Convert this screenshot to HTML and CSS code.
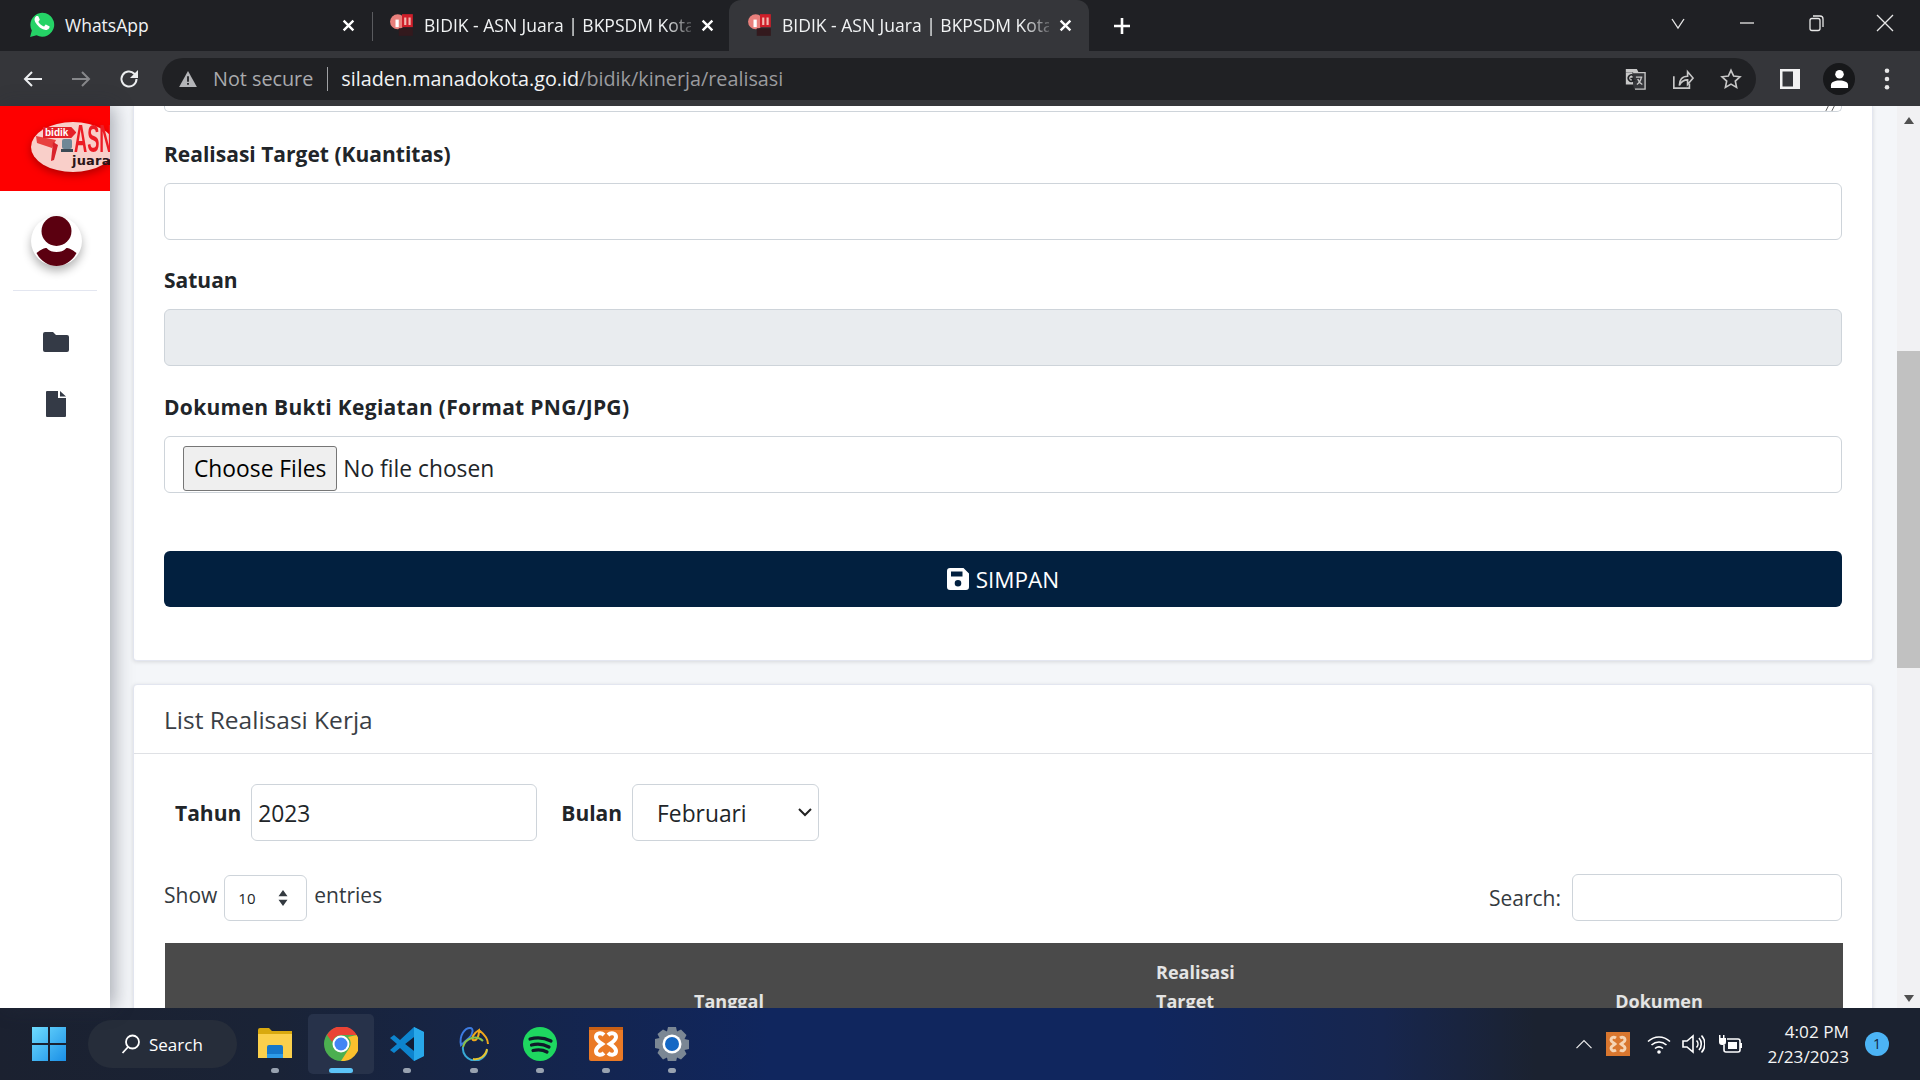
FILE: index.html
```html
<!DOCTYPE html>
<html lang="id">
<head>
<meta charset="utf-8">
<title>BIDIK - ASN Juara | BKPSDM Kota Manado</title>
<link rel="stylesheet" href="styles.css">
</head>
<body>
<header class="browser">
  <div class="tabstrip">
    <div class="tab tab-wa">
      <svg class="favicon-wa" viewBox="0 0 24 24"><path fill="#25d366" d="M1 23l1.600-6A11 11 0 1 1 7 21.400z"/><path fill="#fff" d="M8.500 6.300c-.3-.6-.6-.6-.9-.6h-.8c-.3 0-.7.100-1.100.5-.4.400-1.400 1.400-1.400 3.300s1.400 3.800 1.600 4.100c.2.300 2.800 4.400 6.800 6 3.400 1.300 4 1.100 4.800 1 .7-.1 2.400-1 2.700-1.900.3-.9.300-1.800.2-1.900-.1-.2-.4-.3-.8-.5l-2.700-1.300c-.4-.1-.6-.2-.9.200l-1.200 1.500c-.2.300-.5.300-.8.100-.4-.2-1.700-.6-3.200-2-1.200-1-2-2.300-2.200-2.700-.2-.4 0-.6.200-.8l.6-.7.400-.7c.1-.3.100-.5 0-.7z" transform="translate(1.400 -1.200) scale(.86)"/></svg>
      <span class="tab-title tab-title-plain">WhatsApp</span>
      <svg class="tab-x" viewBox="0 0 12 12"><path d="M1.500 1.500l9 9m0-9l-9 9"/></svg>
    </div>
    <div class="tab tab-second">
      <svg class="favicon" viewBox="0 0 24 24"><circle cx="8" cy="9" r="7" fill="#e8807c"/><path fill="#fff" d="M6 7h3v7H6z"/><path fill="#cf1f2a" d="M12 2h10v12H12z"/><path fill="#f2b8b0" d="M14 5h2v7h-2zM18 5h2v7h-2z"/><path fill="#33191d" d="M9 15h13v7H9z"/></svg>
      <span class="tab-title">BIDIK - ASN Juara | BKPSDM Kota</span>
      <svg class="tab-x" viewBox="0 0 12 12"><path d="M1.500 1.500l9 9m0-9l-9 9"/></svg>
    </div>
    <div class="tab tab-active">
      <svg class="favicon" viewBox="0 0 24 24"><circle cx="8" cy="9" r="7" fill="#e8807c"/><path fill="#fff" d="M6 7h3v7H6z"/><path fill="#cf1f2a" d="M12 2h10v12H12z"/><path fill="#f2b8b0" d="M14 5h2v7h-2zM18 5h2v7h-2z"/><path fill="#33191d" d="M9 15h13v7H9z"/></svg>
      <span class="tab-title">BIDIK - ASN Juara | BKPSDM Kota</span>
      <svg class="tab-x" viewBox="0 0 12 12"><path d="M1.500 1.500l9 9m0-9l-9 9"/></svg>
    </div>
    <svg class="new-tab" viewBox="0 0 18 18"><path d="M9 1v16M1 9h16"/></svg>
    <div class="win-controls">
      <svg class="win-ic" viewBox="0 0 20 20"><path d="M4 6l6 9 6-9"/></svg>
      <svg class="win-ic" viewBox="0 0 20 20"><path d="M3 10h14"/></svg>
      <svg class="win-ic" viewBox="0 0 20 20"><rect x="4" y="5.500" width="10" height="12" rx="2"/><path d="M7 3h7a3 3 0 0 1 3 3v8"/></svg>
      <svg class="win-ic" viewBox="0 0 20 20"><path d="M2 2l16 16M18 2L2 18"/></svg>
    </div>
  </div>
  <div class="toolbar">
    <svg class="nav-ic" viewBox="0 0 24 24"><path d="M21 12H4M11 5l-7 7 7 7"/></svg>
    <svg class="nav-ic nav-dim" viewBox="0 0 24 24"><path d="M3 12h17M13 5l7 7-7 7"/></svg>
    <svg class="nav-ic" viewBox="0 0 24 24"><path d="M19.500 12a7.500 7.500 0 1 1-2.200-5.300L20 9.500"/><path class="fill-ic" d="M21 3v8h-8z"/></svg>
    <div class="omnibox">
      <svg class="warn" viewBox="0 0 20 18"><path d="M10 0l10 18H0z" fill="#b4b5b8"/><path d="M9 6h2v6H9zM9 13.500h2v2H9z" fill="#202124"/></svg>
      <span class="not-secure">Not secure</span>
      <span class="omni-sep"></span>
      <span class="url"><span class="url-host">siladen.manadokota.go.id</span>/bidik/kinerja/realisasi</span>
      <div class="omni-actions">
        <svg class="omni-ic" viewBox="0 0 24 24"><path fill="#c8c8c8" d="M2 1h12l2 4H2z"/><path fill="#c8c8c8" d="M2 5h11v13H2z"/><path fill="#35363a" d="M9 5h14v18H11l-1-4z"/><path fill="none" stroke="#c8c8c8" stroke-width="1.500" d="M10 5h13v18H12"/><path fill="none" stroke="#c8c8c8" stroke-width="1.500" d="M13 10h7M19 10c-1 5-3 7-5 8M15 12c1 3 3 5 5 6"/><path fill="none" stroke="#202124" stroke-width="1.800" d="M10 8a3.500 3.500 0 1 0 0 6h-.500v-2.500H7"/></svg>
        <svg class="omni-ic omni-line" viewBox="0 0 24 24"><path d="M2 9v13h17v-5"/><path d="M8 19c0-6 3-10 9-10V4l6 7-6 7v-5c-4 0-7 2-9 6z"/></svg>
        <svg class="omni-ic omni-line" viewBox="0 0 24 24"><path d="M12 2.500l2.900 6.300 6.900.8-5.100 4.700 1.400 6.800L12 17.600l-6.100 3.500 1.400-6.800-5.100-4.700 6.900-.8z"/></svg>
      </div>
    </div>
    <svg class="panel-ic" viewBox="0 0 20 20"><path fill="#f2f2f2" fill-rule="evenodd" d="M0 0h20v20H0zM2.500 2.500v15h10.500v-15z"/></svg>
    <span class="profile"><svg viewBox="0 0 20 20"><circle cx="10" cy="5.500" r="4.500" fill="#fff"/><path fill="#fff" d="M1 20v-3c0-3.500 4-5 9-5s9 1.500 9 5v3z"/></svg></span>
    <svg class="kebab" viewBox="0 0 6 24"><circle cx="3" cy="3" r="2.500"/><circle cx="3" cy="12" r="2.500"/><circle cx="3" cy="21" r="2.500"/></svg>
  </div>
</header>

<div class="viewport">
  <aside class="sidebar">
    <div class="brand">
      <div class="brand-oval">
        <svg class="brand-art" viewBox="0 0 44 40"><path fill="#e8413f" d="M2 10l20 4-4 8L3 17z"/><path fill="#d9232b" d="M19 16l5 3-4 15-3 1z"/><rect x="28" y="13" width="10" height="10" rx="2" fill="#6f8796"/><path fill="#3c4a55" d="M27 23h12v3H27z"/></svg>
        <span class="brand-bidik">bidik</span>
        <span class="brand-asn">ASN</span>
        <span class="brand-juara">juara</span>
      </div>
    </div>
    <div class="avatar-wrap">
      <span class="avatar"><svg viewBox="0 0 50 50"><circle cx="25" cy="15" r="15" fill="#5b0010"/><path fill="#5b0010" d="M5 37c5-4 8-5 10-5 3 3 6 4 10 4s7-1 10-4c2 0 5 1 10 5-4 8-12 13-20 13S9 45 5 37z"/></svg></span>
    </div>
    <nav class="side-nav">
      <svg class="side-ic-folder" viewBox="0 0 26 20"><path d="M2 0h8l3 3h11a2 2 0 0 1 2 2v13a2 2 0 0 1-2 2H2a2 2 0 0 1-2-2V2a2 2 0 0 1 2-2z"/></svg>
      <svg class="side-ic-file" viewBox="0 0 20 26"><path d="M0 1a1 1 0 0 1 1-1h11v7h8v18a1 1 0 0 1-1 1H1a1 1 0 0 1-1-1zM14 0l6 5.500h-6z"/></svg>
    </nav>
  </aside>

  <main class="content">
    <section class="card card-form">
      <div class="clipped-field">
        <svg class="resize-grip" viewBox="0 0 14 8"><path d="M5 0L1 8M12 0L8 8"/></svg>
      </div>
      <div class="field field-first">
        <label class="field-label">Realisasi Target (Kuantitas)</label>
        <input class="control" type="text">
      </div>
      <div class="field field-unit">
        <label class="field-label">Satuan</label>
        <input class="control control-disabled" type="text" disabled>
      </div>
      <div class="field field-file">
        <label class="field-label field-label-wide">Dokumen Bukti Kegiatan (Format PNG/JPG)</label>
        <input class="control control-file" type="file" multiple>
      </div>
      <button class="btn-save" type="button">
        <svg viewBox="0 0 22 22"><path fill="#fff" fill-rule="evenodd" d="M3 0h13.500L22 5.500V19a3 3 0 0 1-3 3H3a3 3 0 0 1-3-3V3a3 3 0 0 1 3-3zM4 3.500v5h11.500v-5zM11 12a3.300 3.300 0 1 0 0 6.600 3.300 3.300 0 0 0 0-6.600z"/></svg>
        <span>SIMPAN</span>
      </button>
    </section>

    <section class="card card-list">
      <h2 class="card-head">List Realisasi Kerja</h2>
      <div class="card-body">
        <div class="filters">
          <label class="filter-label">Tahun</label>
          <input class="control filter-year" type="text" value="2023">
          <label class="filter-label filter-label-month">Bulan</label>
          <select class="control filter-month"><option>Februari</option></select>
        </div>
        <div class="dt-top">
          <div class="dt-length">
            <span>Show</span>
            <span class="len-select">10
              <svg viewBox="0 0 12 20"><path d="M6 1l5 7H1zM6 19l5-7H1z"/></svg>
            </span>
            <span>entries</span>
          </div>
          <div class="dt-search">
            <span>Search:</span>
            <input class="control search-input" type="text">
          </div>
        </div>
        <table class="dt">
          <thead>
            <tr>
              <th class="col-date">Tanggal</th>
              <th class="col-real">Realisasi<br>Target</th>
              <th class="col-doc">Dokumen</th>
            </tr>
          </thead>
        </table>
      </div>
    </section>
  </main>

  <div class="scrollbar">
    <svg class="sb-arrow" viewBox="0 0 10 7"><path d="M5 0l5 7H0z"/></svg>
    <div class="sb-track"><div class="sb-thumb"></div></div>
    <svg class="sb-arrow" viewBox="0 0 10 7"><path d="M0 0h10L5 7z"/></svg>
  </div>
</div>

<footer class="taskbar">
  <svg class="start" viewBox="0 0 36 36"><defs><linearGradient id="w1" x1="0" y1="0" x2="1" y2="1"><stop offset="0" stop-color="#6fdcff"/><stop offset="1" stop-color="#1a8fe6"/></linearGradient></defs><path fill="url(#w1)" d="M1 1h16v16H1zM19 1h16v16H19zM1 19h16v16H1zM19 19h16v16H19z"/></svg>
  <div class="search-pill">
    <svg viewBox="0 0 20 20"><circle cx="11.500" cy="8" r="6.500"/><path d="M7 13l-5.500 6"/></svg>
    <span>Search</span>
  </div>
  <div class="task-icons">
    <span class="task"><svg viewBox="0 0 34 34"><path fill="#d9a90f" d="M0 3a2 2 0 0 1 2-2h9l3 3h20v8H0z"/><path fill="#fbd04c" d="M0 7h34v24H0z"/><path fill="#1677c9" d="M9 20a2 2 0 0 1 2-2h12a2 2 0 0 1 2 2v11H9z"/><path fill="#2d9be8" d="M9 27h16v4H9z"/></svg><i class="dot"></i></span>
    <span class="task task-active"><svg viewBox="0 0 34 34"><circle cx="17" cy="17" r="17" fill="#4caf50"/><path fill="#ea4335" d="M3 8a17 17 0 0 1 29.700 0H17a9 9 0 0 0-8.800 7z"/><path fill="#fbc02d" d="M32.700 8A17 17 0 0 1 17 34l7.700-12A9 9 0 0 0 24 10z"/><circle cx="17" cy="17" r="8.500" fill="#fff"/><circle cx="17" cy="17" r="6.500" fill="#4285f4"/></svg><i class="dot dot-active"></i></span>
    <span class="task"><svg viewBox="0 0 34 34"><path fill="#0d84ce" d="M24 0l10 5v24l-10 5-14-13-6 5-4-3 7-6-7-6 4-3 6 5z"/><path fill="#28a8ea" d="M24 0l10 5v24l-10 5zM24 10l-9 7 9 7z"/><path fill="#111d36" d="M24 10l-9 7 9 7z"/></svg><i class="dot"></i></span>
    <span class="task"><svg class="task-netbeans" viewBox="0 0 34 34"><path stroke="#3d7be0" d="M4 18C2 8 8 1 13 1c4 0 3 6-1 10-3 3-6 5-8 7z"/><path stroke="#f0a81c" d="M22 3c-5 3-8 8-6 10 4 1 6-3 6-10zm0 0c5 4 9 9 9 14"/><path stroke="#38a9d6" d="M6 20a12 12 0 0 0 24 3"/><path stroke="#8bc34a" d="M6 20a12 12 0 0 1 20-6"/><path stroke="#e5c530" d="M30 22a12 12 0 0 1-14 10"/></svg><i class="dot"></i></span>
    <span class="task"><svg viewBox="0 0 34 34"><circle cx="17" cy="17" r="17" fill="#1ed760"/><path fill="none" stroke="#101a2a" stroke-linecap="round" stroke-width="3.200" d="M7 12c7-2 14-1.500 21 2M8.500 18c6-1.600 12-1 17.500 2M10 23.500c5-1.200 10-.8 14 1.500"/></svg><i class="dot"></i></span>
    <span class="task"><svg viewBox="0 0 34 34"><rect width="34" height="34" rx="2" fill="#ea7a26"/><path fill="#c85f14" d="M0 0h34v3H0z"/><path fill="none" stroke="#fff" stroke-width="4" d="M15 8c-3-3-8-2-8 2 0 3 3 5 6 7-3 2-6 4-6 7 0 4 5 5 8 2M19 8c3-3 8-2 8 2 0 3-3 5-6 7 3 2 6 4 6 7 0 4-5 5-8 2"/></svg><i class="dot"></i></span>
    <span class="task"><svg viewBox="0 0 34 34"><path fill="#7b8794" d="M13 0h8l1 4.500 4-2 5.500 5.500-2 4 4.500 1v9l-4.500 1 2 4-5.500 5.500-4-2-1 4.500h-8l-1-4.500-4 2L2.500 26l2-4L0 21v-9l4.500-1-2-4L8 2.500l4 2z"/><circle cx="17" cy="17" r="9.500" fill="#fff"/><circle cx="17" cy="17" r="7" fill="#1467c4"/></svg><i class="dot"></i></span>
  </div>
  <div class="tray">
    <svg class="tray-caret" viewBox="0 0 20 12"><path d="M1 11l9-9 9 9"/></svg>
    <svg class="tray-xampp" viewBox="0 0 24 24"><rect width="24" height="24" fill="#d9772f"/><path fill="none" stroke="#f5d5b5" stroke-width="3" d="M10 6C7 4 5 6 5 8s3 3 4 4c-1 1-4 2-4 4s2 4 5 2M14 6c3-2 5 0 5 2s-3 3-4 4c1 1 4 2 4 4s-2 4-5 2"/></svg>
    <svg class="tray-ic tray-wifi" viewBox="0 0 24 24"><path d="M1 9.500c6.500-6 15.500-6 22 0M4.500 13c4.500-4 10.500-4 15 0M8 16.500c2.500-2 5.500-2 8 0"/><circle class="tray-fill" cx="12" cy="20" r="1.800"/></svg>
    <svg class="tray-ic" viewBox="0 0 24 24"><path d="M2 9h4l6-5v16l-6-5H2zM15.500 8.500a5 5 0 0 1 0 7M18 6a9 9 0 0 1 0 12M20.500 3.500a12.500 12.500 0 0 1 0 17"/></svg>
    <svg class="tray-ic" viewBox="0 0 24 24"><path d="M9 7h11a2 2 0 0 1 2 2v9a2 2 0 0 1-2 2H8a2 2 0 0 1-2-2v-5"/><path class="tray-fill" d="M10 10h9v7h-9zM22 11h2v5h-2zM1 3h1.500v3h2.500V3h1.500v3H8v4a3 3 0 0 1-3 3H4a3 3 0 0 1-3-3z"/></svg>
    <div class="clock"><span>4:02 PM</span><span>2/23/2023</span></div>
    <span class="notif">1</span>
  </div>
</footer>
</body>
</html>
```

FILE: styles.css
```css
* { box-sizing: border-box; }
html, body { margin: 0; padding: 0; }
body {
  width: 1920px;
  height: 1080px;
  overflow: hidden;
  display: flex;
  flex-direction: column;
  font-family: "Open Sans", "Noto Sans", sans-serif;
  color: #212529;
  background: #fff;
}

/* browser chrome */
.browser { flex: none; height: 106px; background: #35363a; }
.tabstrip {
  height: 51px;
  display: flex;
  align-items: stretch;
  background: #1f2024;
  color: #f1f3f4;
}
.tab {
  position: relative;
  display: flex;
  align-items: center;
  padding-bottom: 1px;
  font-size: 17.500px;
}
.tab-wa { width: 372px; padding-left: 29px; padding-right: 17px; }
.tab-second { width: 357px; padding-left: 17px; padding-right: 15px; }
.tab-second::before {
  content: "";
  position: absolute;
  left: 0;
  top: 12px;
  bottom: 10px;
  width: 1px;
  background: #5a5b5f;
}
.tab-active {
  width: 360px;
  padding-left: 18px;
  padding-right: 17px;
  background: #35363a;
  border-radius: 12px 12px 0 0;
}
.favicon-wa { width: 26px; height: 26px; flex: none; margin-right: 10px; }
.favicon { width: 26px; height: 26px; flex: none; margin-right: 9px; }
.tab-title {
  flex: 1;
  min-width: 0;
  white-space: nowrap;
  -webkit-mask-image: linear-gradient(90deg, #000 90%, rgba(0, 0, 0, .25));
  mask-image: linear-gradient(90deg, #000 90%, rgba(0, 0, 0, .25));
}
.tab-title-plain { -webkit-mask-image: none; mask-image: none; }
.tab-x { width: 13px; height: 13px; flex: none; margin-left: 10px; fill: none; stroke: #fff; stroke-width: 2.200; }
.new-tab { width: 18px; height: 18px; margin: 17px 0 0 24px; fill: none; stroke: #fff; stroke-width: 2.600; }
.win-controls { margin-left: auto; display: flex; align-items: center; gap: 49px; padding: 0 25px 6px 0; }
.win-ic { width: 20px; height: 20px; fill: none; stroke: #e8e8e8; stroke-width: 1.300; }

.toolbar { height: 55px; display: flex; align-items: center; padding-left: 21px; }
.nav-ic { width: 24px; height: 24px; margin-right: 24px; fill: none; stroke: #eceef0; stroke-width: 2; }
.nav-dim { stroke: #86878a; }
.fill-ic { fill: #eceef0; stroke: none; }
.omnibox {
  width: 1594px;
  height: 42px;
  margin-left: -3px;
  border-radius: 21px;
  background: #202124;
  display: flex;
  align-items: center;
  padding: 0 14px 0 17px;
  font-size: 19.800px;
  white-space: nowrap;
}
.warn { width: 18px; height: 16px; margin-right: 16px; }
.not-secure { color: #a9aaad; }
.omni-sep { width: 1px; height: 24px; background: #a0a1a4; margin: 0 13px 0 14px; }
.url { color: #9a9b9e; }
.url-host { color: #f1f3f4; }
.omni-actions { margin-left: auto; display: flex; align-items: center; gap: 26px; }
.omni-ic { width: 22px; height: 22px; }
.omni-line { fill: none; stroke: #c8c8c8; stroke-width: 1.800; }
.panel-ic { width: 20px; height: 20px; margin-left: 24px; }
.profile {
  width: 32px;
  height: 32px;
  margin-left: 23px;
  border-radius: 50%;
  background: #17181a;
  display: flex;
  align-items: center;
  justify-content: center;
}
.profile svg { width: 19px; height: 19px; }
.kebab { width: 6px; height: 22px; margin-left: 29px; fill: #e8e8e8; }

/* page */
.viewport { flex: 1; min-height: 0; display: flex; }
.sidebar {
  flex: none;
  width: 110px;
  background: #fff;
  box-shadow: 4px 0 18px rgba(40, 44, 60, .38);
  position: relative;
  z-index: 1;
  overflow: hidden;
}
.brand {
  height: 85px;
  background: #fe0000;
  padding: 16px 0 0 31px;
  overflow: hidden;
}
.brand-oval {
  position: relative;
  width: 84px;
  height: 50px;
  border-radius: 50%;
  background: #f9cfc9;
  box-shadow: 0 3px 8px rgba(120, 0, 0, .6);
}
.brand-art { position: absolute; left: 3px; top: 4px; width: 44px; height: 40px; }
.brand-bidik {
  position: absolute;
  left: 12px;
  top: 5px;
  padding: 0 8px 0 2px;
  background: #e52028;
  color: #fff;
  font: bold 10px/11px "Liberation Sans", sans-serif;
  clip-path: polygon(0 0, 85% 0, 100% 50%, 85% 100%, 0 100%);
}
.brand-asn {
  position: absolute;
  left: 43px;
  top: 4px;
  color: #ec1c24;
  font: bold 38px/27px "Liberation Sans", sans-serif;
  transform: scaleX(.48);
  transform-origin: left top;
}
.brand-juara {
  position: absolute;
  left: 41px;
  top: 31px;
  color: #2a1518;
  font: bold 13px/15px "DejaVu Sans", sans-serif;
  letter-spacing: .2px;
}
.avatar-wrap {
  height: 100px;
  margin: 0 13px;
  border-bottom: 1px solid #e3e6f0;
  display: flex;
  justify-content: center;
  padding: 25px 0 0 2px;
}
.avatar {
  width: 51px;
  height: 50px;
  border-radius: 50%;
  background: #fff;
  box-shadow: 0 5px 10px rgba(0, 0, 0, .3);
}
.avatar svg { display: block; width: 100%; height: 100%; }
.side-nav { display: flex; flex-direction: column; align-items: center; padding: 41px 0 0 2px; fill: #343a46; }
.side-ic-folder { width: 26px; height: 20px; margin-bottom: 39px; }
.side-ic-file { width: 20px; height: 26px; }

.content {
  flex: 1;
  min-width: 0;
  overflow: hidden;
  background: #f4f6f9;
  padding: 0 24px 0 23px;
}
.card {
  background: #fff;
  border: 1px solid #e3e6f0;
  box-shadow: 0 1px 4px rgba(0, 0, 0, .12);
  border-radius: 4px;
}
.card-form { border-top: 0; border-radius: 0 0 4px 4px; padding: 0 30px; height: 555px; }
.clipped-field {
  position: relative;
  height: 6px;
  border: 1px solid #ced4da;
  border-top: 0;
  border-radius: 0 0 5px 5px;
}
.resize-grip { position: absolute; right: 4px; top: -2px; width: 12px; height: 7px; fill: none; stroke: #444; stroke-width: 1; }
.field { margin-bottom: 26px; }
.field-first { margin-top: 28px; }
.field-label { display: block; height: 43px; margin-top: -1px; padding-bottom: 1px; font-size: 21px; font-weight: 700; line-height: 30px; }
.field-first .field-label { height: 44px; }
.field-label-wide { letter-spacing: .3px; }
.control {
  font-family: inherit;
  font-size: 22.800px;
  color: #212529;
  background: #fff;
  border: 1px solid #ced4da;
  border-radius: 6px;
  outline: 0;
  padding: 0 6px;
}
.field .control { display: block; width: 100%; height: 57px; }
.control-disabled { background: #e9ecef; }
.field-unit { margin-bottom: 27px; }
.field-unit .field-label { height: 44px; }
.field-file { margin-bottom: 58px; }
.field-file .field-label { height: 44px; }
.field .control-file { padding: 9px 18px; }
.control-file::file-selector-button { font: inherit; height: 45px; margin-right: 6px; padding: 0 10px; border-radius: 3px; border: 1px solid #767676; background: #efefef; }
.btn-save {
  display: flex;
  align-items: center;
  justify-content: center;
  gap: 7px;
  width: 100%;
  height: 56px;
  border: 0;
  border-radius: 6px;
  background: #02203f;
  color: #fff;
  font-family: inherit;
  font-size: 22.500px;
}
.btn-save svg { width: 22px; height: 22px; }

.card-list { margin-top: 23px; height: 500px; }
.card-head {
  margin: 0;
  height: 69px;
  padding: 0 30px;
  display: flex;
  align-items: center;
  border-bottom: 1px solid #dfe1e5;
  font-size: 24.500px;
  font-weight: 400;
  color: #3a3e45;
}
.card-body { padding: 30px 30px 0; }
.filters { display: flex; align-items: center; height: 57px; padding-left: 11px; }
.filter-label { font-size: 21px; font-weight: 700; margin-right: 10px; }
.filter-label-month { margin-left: 24px; }
.filters .control { height: 57px; }
.filter-year { width: 286px; padding-top: 2px; }
.filter-month {
  width: 187px;
  padding-left: 24px;
  padding-top: 2px;
  appearance: none;
  -webkit-appearance: none;
  background-image: url("data:image/svg+xml,%3Csvg xmlns='http://www.w3.org/2000/svg' viewBox='0 0 14 9'%3E%3Cpath d='M1 1l6 6 6-6' fill='none' stroke='%23222' stroke-width='2'/%3E%3C/svg%3E");
  background-repeat: no-repeat;
  background-position: right 6px center;
  background-size: 14px 9px;
}
.dt-top { display: flex; justify-content: space-between; align-items: center; margin-top: 33px; font-size: 21px; color: #343a40; }
.dt-length { display: flex; align-items: center; gap: 7px; }
.dt-length span:first-child, .dt-length span:last-child { position: relative; top: -3px; }
.len-select {
  width: 83px;
  height: 46px;
  border: 1px solid #ced4da;
  border-radius: 6px;
  display: flex;
  align-items: center;
  justify-content: space-between;
  padding: 0 17px 0 13px;
  font-size: 15px;
  color: #212529;
}
.len-select svg { width: 12px; height: 18px; fill: #343a40; }
.dt-search { display: flex; align-items: center; gap: 11px; }
.search-input { width: 270px; height: 47px; }
.dt { width: 1678px; margin: 22px 0 0 1px; border-collapse: collapse; table-layout: fixed; }
.dt th {
  background: #4a4a4a;
  color: #e4e4e4;
  font-size: 18px;
  font-weight: 700;
  line-height: 29px;
  height: 73px;
  vertical-align: bottom;
  padding: 0;
}
.col-date { width: 860px; text-align: center; padding-left: 268px !important; }
.col-real { width: 430px; text-align: left; padding-left: 131px !important; }
.col-doc { text-align: center; padding-left: 20px !important; }

.scrollbar { flex: none; width: 23px; background: #f1f1f3; display: flex; flex-direction: column; align-items: center; padding: 11px 0 6px; }
.sb-arrow { flex: none; width: 10px; height: 7px; fill: #505050; }
.sb-track { flex: 1; width: 100%; padding-top: 227px; }
.sb-thumb { width: 100%; height: 317px; background: #c1c1c1; }

/* taskbar */
.taskbar {
  flex: none;
  height: 72px;
  display: flex;
  align-items: center;
  padding-left: 31px;
  background: linear-gradient(90deg, #1b2130 0, #1a2336 14%, #10265e 40%, #10265e 60%, #17264e 72%, #1b2230 80%);
  color: #fff;
}
.start { width: 36px; height: 36px; flex: none; }
.search-pill {
  width: 149px;
  height: 48px;
  margin-left: 21px;
  border-radius: 24px;
  background: #262d3a;
  display: flex;
  align-items: center;
  gap: 8px;
  padding-left: 33px;
  font-size: 17px;
}
.search-pill svg { width: 20px; height: 20px; fill: none; stroke: #fff; stroke-width: 1.800; }
.task-icons { display: flex; margin-left: 5px; }
.task { position: relative; width: 66.200px; height: 60px; display: flex; align-items: center; justify-content: center; }
.task svg { width: 34px; height: 34px; }
.task-netbeans { fill: none; stroke-width: 2; }
.task-active { background: #27324a; border-radius: 5px; }
.dot { position: absolute; left: 50%; bottom: 1px; width: 8px; height: 5px; margin-left: -4px; border-radius: 3px; background: #98a2b0; }
.dot-active { width: 24px; margin-left: -12px; background: #5cc4f8; }
.tray { margin-left: auto; display: flex; align-items: center; padding-right: 31px; }
.tray-caret { width: 18px; height: 10px; fill: none; stroke: #eaeaea; stroke-width: 1.500; }
.tray-xampp { width: 24px; height: 24px; margin-left: 13px; }
.tray-ic { width: 24px; height: 24px; margin-left: 13px; fill: none; stroke: #fff; stroke-width: 1.600; }
.tray-fill { fill: #fff; stroke: none; }
.tray-wifi { margin-left: 17px; margin-right: -3px; }
.clock { width: 98px; margin-left: 9px; display: flex; flex-direction: column; align-items: flex-end; font-size: 17.200px; line-height: 25px; color: #f4f4f4; }
.notif {
  width: 24px;
  height: 24px;
  margin-left: 16px;
  border-radius: 50%;
  background: #4cb4f5;
  color: #10253c;
  font-size: 14px;
  line-height: 24px;
  text-align: center;
}
```
